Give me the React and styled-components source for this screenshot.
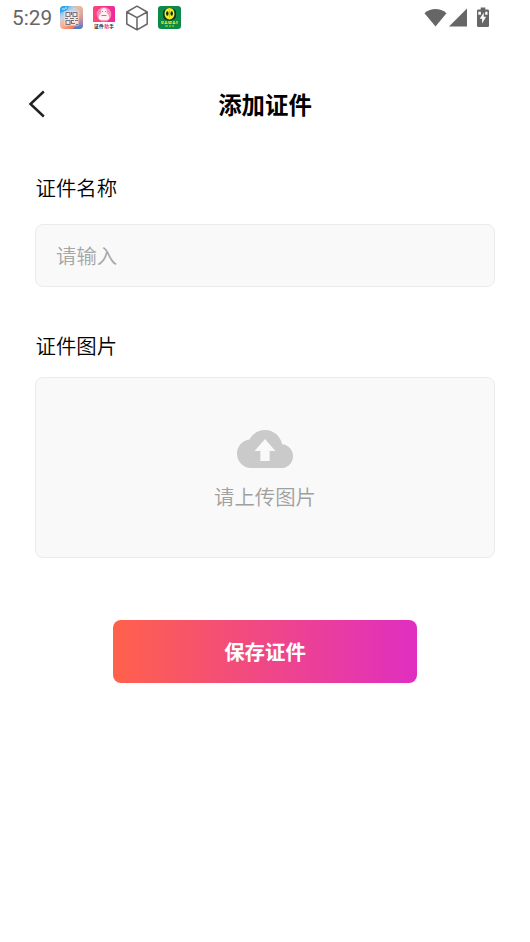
import React, { useState } from "react";
import styled, { createGlobalStyle } from "styled-components";

const GlobalStyle = createGlobalStyle`
  * {
    box-sizing: border-box;
  }
  body {
    margin: 0;
    background: #fff;
    font-family: Roboto, "Noto Sans CJK SC", sans-serif;
  }
`;

const Screen = styled.div`
  width: 530px;
  height: 942px;
  overflow: hidden;
  background: #fff;
  color: #000;
`;

const StatusBar = styled.div`
  display: flex;
  justify-content: space-between;
  height: 36px;
  padding: 0 40px 0 12px;
  color: #666;
  svg {
    display: block;
  }
`;

const StatusGroup = styled.div`
  display: flex;
  align-items: center;
  height: 35px;
`;

const Time = styled.span`
  width: 47px;
  font-size: 20.8px;
  line-height: 36px;
  padding-top: 1px;
  white-space: nowrap;
`;

const Header = styled.header`
  display: grid;
  grid-template-columns: 60px 1fr 60px;
  align-items: center;
  height: 68px;
  margin-top: 35px;
`;

const BackButton = styled.button`
  display: flex;
  height: 68px;
  align-items: center;
  padding: 0 0 2px 28px;
  border: none;
  background: none;
`;

const Title = styled.h1`
  margin: 0;
  padding-top: 2px;
  font-size: 23.4px;
  font-weight: 700;
  line-height: 34px;
  text-align: center;
`;

const Form = styled.form`
  display: flex;
  flex-direction: column;
  padding: 35px 35px 0;
`;

const Label = styled.label`
  font-size: 20.4px;
  font-weight: 350;
  line-height: 30px;
  margin: ${(props) => props.$margin};
  padding-left: 0.5px;
`;

const Input = styled.input`
  width: 100%;
  height: 63px;
  padding: 2px 20px 0;
  border: 1px solid #ebebeb;
  border-radius: 8px;
  outline: none;
  background: #f9f9f9;
  font-family: inherit;
  font-size: 20.4px;
  font-weight: 350;
  &::placeholder {
    color: #a6a6a6;
    opacity: 1;
  }
`;

const Upload = styled.button`
  display: flex;
  flex-direction: column;
  align-items: center;
  width: 100%;
  height: 181px;
  padding: 52px 0 0;
  border: 1px solid #ebebeb;
  border-radius: 8px;
  background: #f9f9f9;
  color: #a0a0a0;
  font-family: inherit;
  font-size: 20.4px;
  font-weight: 350;
  line-height: 30px;
  svg {
    margin-bottom: 15px;
  }
`;

const SaveButton = styled.button`
  align-self: center;
  width: 304px;
  height: 63px;
  margin-top: 62px;
  padding: 0 0 2px;
  border: none;
  border-radius: 8px;
  background: linear-gradient(90deg, #ff614b, #e02ec1);
  color: #fff;
  font-family: inherit;
  font-size: 20.4px;
  font-weight: 700;
`;

const AppIcon = styled.svg`
  width: ${(props) => props.$width || 23}px;
  height: ${(props) => props.$height || 23}px;
  margin-left: ${(props) => props.$gap || 0}px;
`;

function ScanIcon() {
  return (
    <AppIcon viewBox="0 0 23 23" $gap={1}>
      <defs>
        <linearGradient id="scan" x1="0" y1="0" x2="0.7" y2="1">
          <stop offset="0" stopColor="#35a9ee" />
          <stop offset="0.38" stopColor="#c4d5e8" />
          <stop offset="0.65" stopColor="#ffad85" />
          <stop offset="1" stopColor="#ed5b52" />
        </linearGradient>
        <linearGradient id="scanEdge" x1="0" y1="0" x2="0" y2="1">
          <stop offset="0" stopColor="#f6b080" stopOpacity="0.7" />
          <stop offset="0.55" stopColor="#98a5df" stopOpacity="0.4" />
          <stop offset="1" stopColor="#397ed0" />
        </linearGradient>
      </defs>
      <rect width="23" height="23" rx="4" fill="url(#scan)" />
      <path d="M13 0h6a4 4 0 0 1 4 4v15a4 4 0 0 1-4 4h-6l7-8V5z" fill="url(#scanEdge)" />
      <path d="M0 4a4 4 0 0 1 4-4h5L7 4 0 7z" fill="#2fa7f0" />
      <path d="M2 3h3M5 2h2" stroke="#d9f3ff" />
      <rect x="4.5" y="5.5" width="14" height="14" fill="#f4eeee" fillOpacity="0.85" />
      <path
        d="M6 6.5h4v4H6zM13 6.5h4v4h-4zM6 14.5h4v4H6zM5 12.5h3m2 0h4m2 0h2M12 14.5h2m1 0h3M12 17.5h3m1 1h2M11.5 6v3m0 5v4"
        fill="none"
        stroke="#77737b"
        strokeWidth="1.1"
      />
    </AppIcon>
  );
}

function PinkIcon() {
  return (
    <AppIcon viewBox="0 0 22 23" $width={22} $gap={10}>
      <defs>
        <linearGradient id="pink" x1="0" x2="1">
          <stop offset="0" stopColor="#fb4779" />
          <stop offset="1" stopColor="#ef269d" />
        </linearGradient>
      </defs>
      <path d="M2 0h18a2 2 0 0 1 2 2v14H0V2a2 2 0 0 1 2-2z" fill="url(#pink)" />
      <circle cx="11" cy="8.5" r="7.3" fill="#ff8db8" />
      <path d="M8.2 5c0-4 5.6-4 5.6 0v2c3.5 2.5 3 7 0 7H8.2c-3 0-3.5-4.5 0-7z" fill="#fff0f1" />
      <path d="M9 5.5h1m2 0h1M8.5 9.5h5" fill="none" stroke="#b94d79" strokeWidth="0.8" />
      <text x="1" y="21.8" fontSize="4.8" letterSpacing="0.3" fontWeight="700" fill="#282828">
        证件<tspan fill="#f33683">助</tspan>手
      </text>
    </AppIcon>
  );
}

function CubeIcon() {
  return (
    <AppIcon viewBox="0 0 24 26" $width={24} $height={26} $gap={9.5}>
      <path
        d="M12 1.2 22.2 7v12L12 24.8 1.8 19V7zM1.8 7 12 12.7 22.2 7M12 12.7v12"
        fill="none"
        stroke="#666"
        strokeWidth="1.5"
        strokeLinejoin="round"
      />
    </AppIcon>
  );
}

function GreenIcon() {
  return (
    <AppIcon viewBox="0 0 23 23" $gap={9}>
      <rect width="23" height="23" rx="3" fill="#0b8a48" />
      <path d="M5 6c1-5 12-5 13 0v4c0 6-13 6-13 0z" fill="#15391d" />
      <ellipse cx="11.5" cy="7.7" rx="5" ry="5.8" fill="#f6ee20" />
      <ellipse cx="9.3" cy="7.5" rx="1.2" ry="2.2" fill="#082c18" />
      <ellipse cx="13.7" cy="7.5" rx="1.2" ry="2.2" fill="#082c18" />
      <path d="M11.5 3.5v8" stroke="#b5b51c" strokeWidth="0.6" />
      <path
        d="M3 15.8h3m1 0h2m1 0h4m1 0h2m1 0h2M3.5 17.3h2m1 0h3m1 0h3m1 0h3m1 0h1M7 20h3m1 0h2m1 0h2"
        stroke="#d5dc20"
        strokeWidth="1.2"
      />
    </AppIcon>
  );
}

function SystemIcons() {
  return (
    <svg width="66" height="22" viewBox="0 0 66 22">
      <path d="M0.5 6.2C7 0.7 16 0.7 22.5 6.2L11.5 19.5z" fill="#666" />
      <path d="M43 1.5v18H25z" fill="#666" />
      <path
        d="M56.7 0.5h4.6v2h2.4a1.3 1.3 0 0 1 1.3 1.3v14.9a1.3 1.3 0 0 1-1.3 1.3h-9.4a1.3 1.3 0 0 1-1.3-1.3V3.8a1.3 1.3 0 0 1 1.3-1.3h2.4z"
        fill="#666"
      />
      <path d="M59.7 5.5v4.3h2.4l-4 6.8v-4.8h-2.3zM54.3 4.7h2.6v3.1h-2.6zM61.2 4.7h2.3v3.1h-2.3z" fill="#fff" />
    </svg>
  );
}

function App() {
  const [name, setName] = useState("");

  return (
    <Screen>
      <GlobalStyle />
      <StatusBar>
        <StatusGroup>
          <Time>5:29</Time>
          <ScanIcon />
          <PinkIcon />
          <CubeIcon />
          <GreenIcon />
        </StatusGroup>
        <StatusGroup>
          <SystemIcons />
        </StatusGroup>
      </StatusBar>
      <Header>
        <BackButton aria-label="返回">
          <svg width="18" height="28" viewBox="0 0 18 28">
            <path d="M15.8 1.5 2.5 14l13.3 12.5" fill="none" stroke="#222" strokeWidth="2.5" />
          </svg>
        </BackButton>
        <Title>添加证件</Title>
      </Header>
      <Form onSubmit={(e) => e.preventDefault()}>
        <Label htmlFor="name" $margin="0 0 20px">
          证件名称
        </Label>
        <Input id="name" placeholder="请输入" value={name} onChange={(e) => setName(e.target.value)} />
        <Label htmlFor="upload" $margin="45px 0 15px">
          证件图片
        </Label>
        <Upload id="upload" type="button">
          <svg width="56" height="38" viewBox="0 4 24 16" preserveAspectRatio="none">
            <path
              d="M19.35 10.04C18.67 6.59 15.64 4 12 4 9.11 4 6.6 5.64 5.35 8.04 2.34 8.36 0 10.91 0 14c0 3.31 2.69 6 6 6h13c2.76 0 5-2.24 5-5 0-2.64-2.05-4.78-4.65-4.96zM14 12.8v4.2h-4v-4.2H7.5L12 7.8l4.5 5z"
              fill="#cacaca"
            />
          </svg>
          请上传图片
        </Upload>
        <SaveButton>保存证件</SaveButton>
      </Form>
    </Screen>
  );
}

export default App;
